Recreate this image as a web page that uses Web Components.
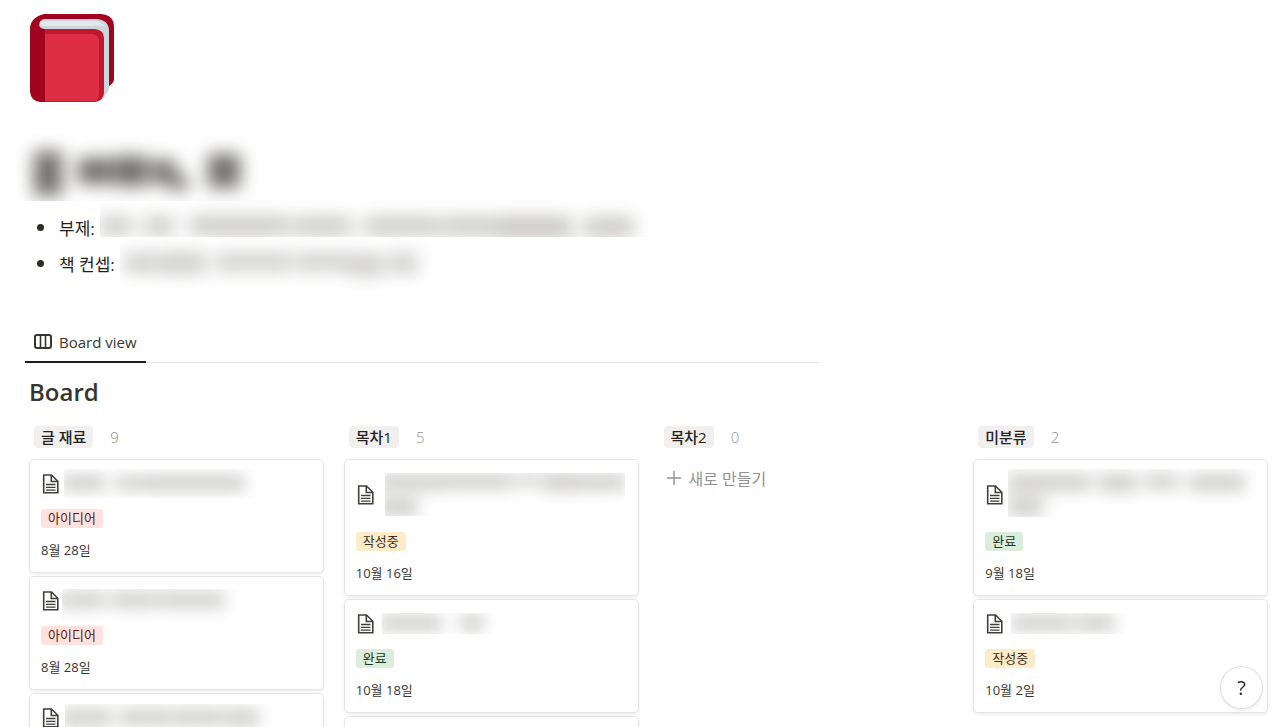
<!DOCTYPE html>
<html lang="ko">
<head>
  <meta charset="utf-8">
  <meta name="viewport" content="width=device-width, initial-scale=1">
  <title>Board</title>
  <style>
    html { scrollbar-width: none; }
    body {
      margin: 0;
      background: #fff;
      color: #37352f;
      font-family: "Open Sans", "Noto Sans CJK KR", sans-serif;
      font-size: 16px;
    }
  </style>
</head>
<body>
  <book-page>
    <smudge-text slot="title" blur="9" shade="0.72" clip="-15 -30 280 81"
      words="4,1,28,45 48,8,34,26 84,6,34,30 122,10,24,24 140,26,18,14 178,4,32,34"></smudge-text>

    <page-note label="부제:">
      <smudge-text blur="9" shade="0.27" clip="0 -10 560 38"
        words="0,8,32,18 44,8,30,18 90,7,98,19 192,8,60,18 264,8,76,18 342,8,56,18 398,7,74,23 484,8,50,20"></smudge-text>
    </page-note>
    <page-note label="책 컨셉:">
      <smudge-text blur="9" shade="0.24" clip="0 -8 338 54"
        words="4,8,32,20 38,7,48,22 96,8,76,18 176,8,54,18 230,9,34,22 270,8,28,20"></smudge-text>
    </page-note>

    <view-tab slot="tabs">Board view</view-tab>

    <board-column name="글 재료" count="9">
      <board-card tag="아이디어" color="red" date="8월 28일">
        <smudge-text clip="1 -3 230 29" words="-2,3,44,16 52,4,32,14 84,3,40,16 124,3,58,16"></smudge-text>
      </board-card>
      <board-card tag="아이디어" color="red" date="8월 28일">
        <smudge-text clip="-1 0 230 35" words="-4,3,46,16 48,3,46,16 96,3,66,16"></smudge-text>
      </board-card>
      <board-card>
        <smudge-text clip="2 -2 240 31" words="-2,3,50,17 56,3,52,16 110,3,50,16 162,3,34,17"></smudge-text>
      </board-card>
    </board-column>

    <board-column name="목차1" count="5">
      <board-card tag="작성중" color="yellow" date="10월 16일" lines="2">
        <smudge-text clip="7 1 240 43" words="0,2,66,16 66,2,70,15 140,2,20,12 164,1,38,18 202,2,46,16 0,26,40,18"></smudge-text>
      </board-card>
      <board-card tag="완료" color="green" date="10월 18일">
        <smudge-text clip="4 1 160 21" words="2,3,62,16 82,3,24,16"></smudge-text>
      </board-card>
      <board-card></board-card>
    </board-column>

    <board-column name="목차2" count="0">
      <add-card>새로 만들기</add-card>
    </board-column>

    <board-column name="미분류" count="2">
      <board-card tag="완료" color="green" date="9월 18일" lines="2">
        <smudge-text clip="1 -3 251 48" words="0,2,84,17 92,2,38,18 138,2,34,15 182,2,56,17 0,25,36,19"></smudge-text>
      </board-card>
      <board-card tag="작성중" color="yellow" date="10월 2일">
        <smudge-text clip="4 1 160 21" words="4,3,62,16 70,3,38,16"></smudge-text>
      </board-card>
    </board-column>

    <help-button slot="help">?</help-button>
  </book-page>

  <script>
    // Helper - builds a template from markup
    function makeTemplate(html) {
      const template = document.createElement('template')
      template.innerHTML = html
      return template
    }

    // Base class - clones the template of the subclass into its shadow root
    class BaseElement extends HTMLElement {
      constructor() {
        super()
        this._shadowRoot = this.attachShadow({ mode: 'open' })
        this._shadowRoot.appendChild(this.constructor.template.content.cloneNode(true))
      }

      _find(selector) {
        return this._shadowRoot.querySelector(selector)
      }
    }

    // ---------
    // <smudge-text> - Words blurred past reading.
    // words is a list of x,y,width,height and clip is the box that cuts the blur off
    class SmudgeText extends BaseElement {
      static template = makeTemplate(`
        <style>
          :host {
            display: block;
            height: 100%;
          }
          svg {
            display: block;
            width: 100%;
            height: 100%;
            overflow: visible;
            pointer-events: none;
          }
        </style>
        <svg aria-hidden="true">
          <defs>
            <clipPath id="clip"><rect/></clipPath>
            <filter id="blur" filterUnits="userSpaceOnUse" x="-60" y="-60" width="800" height="200"
              color-interpolation-filters="sRGB">
              <feGaussianBlur/>
            </filter>
          </defs>
          <g clip-path="url(#clip)"><g id="words" filter="url(#blur)" fill="#37352f"></g></g>
        </svg>
      `)

      connectedCallback() {
        this._find('feGaussianBlur').setAttribute('stdDeviation', this.getAttribute('blur') || 8)
        this._setRect(this._find('#clip rect'), this.getAttribute('clip').split(' '))
        const words = this._find('#words')
        words.setAttribute('opacity', this.getAttribute('shade') || 0.24)
        this.getAttribute('words').split(' ').forEach(word => {
          const rect = document.createElementNS('http://www.w3.org/2000/svg', 'rect')
          this._setRect(rect, word.split(','))
          words.appendChild(rect)
        })
      }

      _setRect(rect, values) {
        const names = ['x', 'y', 'width', 'height']
        names.forEach((name, i) => rect.setAttribute(name, values[i]))
      }
    }
    customElements.define('smudge-text', SmudgeText)

    // ---------
    // <book-icon> - The red book on top of the page
    class BookIcon extends BaseElement {
      static template = makeTemplate(`
        <style>
          :host { display: block; }
          svg { display: block; }
        </style>
        <svg width="84" height="88" viewBox="0 0 84 88" aria-hidden="true">
          <path fill="#a0041e" d="M14 0H71Q84 1 84 13V65Q84 69 79 72L70 80H10Q0 80 0 76V14Q1 3 14 0Z"/>
          <path fill="#ccd6dd" d="M14 5H67Q79 6 79 17V73Q79 78 74 82L60 86V18H14Q9 17 9 12Q9 6 14 5Z"/>
          <path fill="#e1e8ed" d="M14 7H66Q72 8 75 13Q69 10 62 12H14Q10 12 10 10Q11 7 14 7Z"/>
          <path fill="#be1931" d="M10 15H65Q74 16 74 24V78Q74 87 65 88H10Z"/>
          <path fill="#dd2e44" d="M15 20H62Q69 21 69 27V79Q69 86 64 87H15Z"/>
          <path fill="#a0041e" d="M0 14Q2 6 9 8Q8 15 15 15V88H10Q1 87 0 78Z"/>
        </svg>
      `)
    }
    customElements.define('book-icon', BookIcon)

    // ---------
    // <book-page> - The whole page: icon, title, notes and board
    class BookPage extends BaseElement {
      static template = makeTemplate(`
        <style>
          :host { display: block; }
          header { padding: 14px 30px 0; }
          .title {
            height: 44px;
            margin-top: 48px;
          }
          ul {
            margin: 0;
            padding: 15px 30px 41px;
            list-style: none;
          }
          nav {
            display: flex;
            max-width: 795px;
            margin-left: 25px;
            box-shadow: inset 0 -1px #e6e6e4;
          }
          h2 {
            margin: 0;
            padding: 13px 29px 0;
            font-size: 24px;
            line-height: 32px;
            font-weight: 600;
          }
          .board {
            display: grid;
            grid-template-columns: repeat(4, minmax(0, 1fr));
            column-gap: 22px;
            align-items: start;
            padding: 18px 13px 24px 30px;
          }
        </style>
        <header>
          <book-icon></book-icon>
          <div class="title"><slot name="title"></slot></div>
        </header>
        <ul></ul>
        <nav><slot name="tabs"></slot></nav>
        <main>
          <h2>Board</h2>
          <div class="board"><slot></slot></div>
        </main>
        <slot name="help"></slot>
      `)

      // Each note goes into a list item with a slot of its own
      connectedCallback() {
        const list = this._find('ul')
        this.querySelectorAll('page-note').forEach((note, i) => {
          note.slot = `note-${i}`
          const item = document.createElement('li')
          item.innerHTML = `<slot name="note-${i}"></slot>`
          list.appendChild(item)
        })
      }
    }

    // ---------
    // <page-note> - One bullet under the title
    class PageNote extends BaseElement {
      static template = makeTemplate(`
        <style>
          :host {
            display: flex;
            align-items: center;
            height: 36px;
            color: #1f1e1b;
            font-size: 17px;
          }
          i {
            width: 7px;
            height: 7px;
            margin: 0 15px 0 7px;
            border-radius: 50%;
            background: #2f2d28;
          }
          .text {
            flex: 1;
            height: 36px;
            margin-left: 5px;
          }
        </style>
        <i></i><span></span><div class="text"><slot></slot></div>
      `)

      connectedCallback() {
        this._find('span').textContent = this.getAttribute('label')
      }
    }
    customElements.define('page-note', PageNote)

    // ---------
    // <view-tab> - The selected view
    class ViewTab extends BaseElement {
      static template = makeTemplate(`
        <style>
          :host { display: block; }
          button {
            display: flex;
            align-items: center;
            gap: 7px;
            height: 41px;
            padding: 0 9px;
            border: 0;
            border-bottom: 2px solid #1c1b18;
            background: none;
            color: #37352f;
            font: inherit;
            font-size: 15px;
          }
          svg { display: block; }
        </style>
        <button type="button">
          <svg width="18" height="16" viewBox="0 0 18 16" fill="none" stroke="#37352f" stroke-width="2" aria-hidden="true">
            <rect x="1" y="1" width="16" height="13" rx="2"/>
            <path stroke-width="1.6" d="M6.5 1V14M11.5 1V14"/>
          </svg>
          <slot></slot>
        </button>
      `)
    }
    customElements.define('view-tab', ViewTab)

    // ---------
    // <board-column> - A group of cards with its name and count
    class BoardColumn extends BaseElement {
      static template = makeTemplate(`
        <style>
          :host { display: block; }
          h3 {
            display: flex;
            align-items: center;
            gap: 17px;
            margin: 0 0 12px;
            padding-left: 4px;
            font-size: 15px;
            line-height: 22px;
            font-weight: 400;
          }
          .name {
            padding: 0 7px;
            border-radius: 4px;
            background: #f1f0ef;
            color: #24231f;
            font-weight: 500;
          }
          .count {
            color: #92918d;
            font-weight: 300;
          }
          .cards {
            display: flex;
            flex-direction: column;
            gap: 5px;
          }
        </style>
        <h3><span class="name"></span><span class="count"></span></h3>
        <div class="cards"><slot></slot></div>
      `)

      connectedCallback() {
        this._find('.name').textContent = this.getAttribute('name')
        this._find('.count').textContent = this.getAttribute('count')
      }
    }
    customElements.define('board-column', BoardColumn)

    // ---------
    // <board-card> - A page on the board. lines="2" makes room for a long title
    class BoardCard extends BaseElement {
      static template = makeTemplate(`
        <style>
          :host { display: block; }
          a {
            display: block;
            padding: 12px 11px;
            border-radius: 4px;
            background: #fff;
            box-shadow: 0 0 0 1px #e5e5e4, 0 2px 4px #0000001a;
            color: inherit;
            text-decoration: none;
          }
          .title {
            display: flex;
            align-items: center;
            gap: 4px;
            height: 23px;
            margin-bottom: 14px;
          }
          :host([lines="2"]) .title { height: 46px; }
          .title svg { flex: none; }
          .text {
            position: relative;
            flex: 1;
            height: 100%;
          }
          .tag {
            display: table;
            padding: 0 7px;
            border-radius: 3px;
            font-size: 13px;
            line-height: 19px;
          }
          :host([color="red"]) .tag { background: #ffe2dd; color: #5d1715; }
          :host([color="yellow"]) .tag { background: #fdecc8; color: #402c1b; }
          :host([color="green"]) .tag { background: #dbeddb; color: #1c3829; }
          .date {
            margin-top: 12px;
            font-size: 13px;
            line-height: 20px;
          }
        </style>
        <a href="#">
          <div class="title">
            <svg width="18" height="20" viewBox="-1 0 18 20" fill="none" stroke="#40403b" stroke-width="1.6" aria-hidden="true">
              <path d="M1.7 1H9.5L15.8 7.3V18.8H1.7Z"/>
              <path d="M9.3 1V7.5H15.8"/>
              <path stroke-width="1.3" d="M4 10.5H13.5M4 13.3H13.5M4 16.1H13.5"/>
            </svg>
            <div class="text"><slot></slot></div>
          </div>
          <span class="tag"></span>
          <div class="date"></div>
        </a>
      `)

      connectedCallback() {
        this._find('.tag').textContent = this.getAttribute('tag')
        this._find('.date').textContent = this.getAttribute('date')
      }
    }
    customElements.define('board-card', BoardCard)

    // ---------
    // <add-card> - Button for an empty column
    class AddCard extends BaseElement {
      static template = makeTemplate(`
        <style>
          :host { display: block; }
          button {
            display: flex;
            align-items: center;
            gap: 8px;
            height: 35px;
            padding: 0 7px;
            border: 0;
            background: none;
            color: #92918d;
            font: inherit;
          }
        </style>
        <button type="button">
          <svg width="14" height="14" viewBox="0 0 14 14" stroke="#92918d" stroke-width="1.4" aria-hidden="true">
            <path d="M7 0V14M0 7H14"/>
          </svg>
          <slot></slot>
        </button>
      `)
    }
    customElements.define('add-card', AddCard)

    // ---------
    // <help-button> - Floats over the corner of the page
    class HelpButton extends BaseElement {
      static template = makeTemplate(`
        <style>
          :host {
            position: fixed;
            right: 18px;
            bottom: 19px;
          }
          button {
            display: block;
            width: 41px;
            height: 41px;
            padding: 0;
            border: 0;
            border-radius: 50%;
            background: #fff;
            box-shadow: 0 0 0 1px #dededc, 0 2px 4px #0000001a;
            color: #24231f;
            font: inherit;
            font-size: 20px;
          }
        </style>
        <button type="button"><slot></slot></button>
      `)
    }
    customElements.define('help-button', HelpButton)

    customElements.define('book-page', BookPage)
  </script>
</body>
</html>
